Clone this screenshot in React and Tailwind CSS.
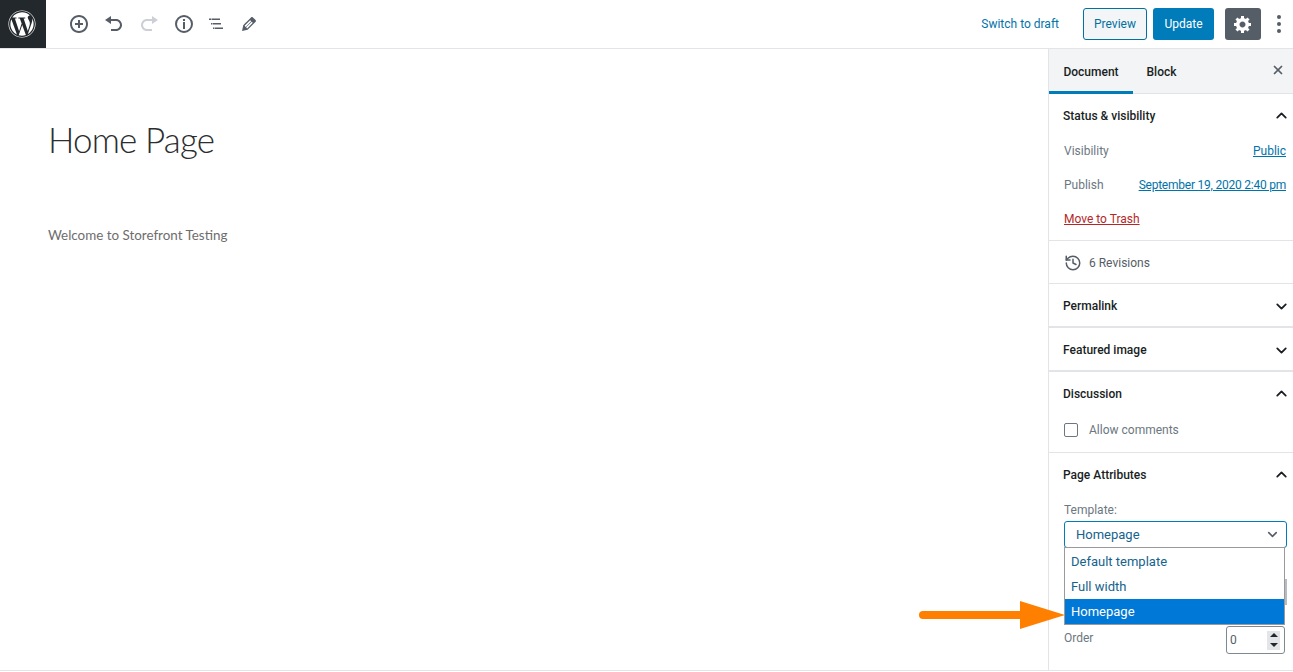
import React from 'react'
import { FaWordpress } from 'react-icons/fa'
import { ChevronUp, ChevronDown, History, X } from 'lucide-react'

const Icon = ({ d, className = 'text-[#555d66]' }) => (
  <svg viewBox="0 0 20 20" className={`w-5 h-5 fill-current ${className}`}>
    <path fillRule="evenodd" d={d} />
  </svg>
)

const Panel = ({ title, open, children, className = '' }) => (
  <div className={`border-b border-[#e2e4e7] ${className}`}>
    <div className="flex items-center justify-between h-[44px] pl-[14px] pr-[3px] text-[#191e23] font-medium text-[12px]">
      <span>{title}</span>
      {open ? <ChevronUp className="w-[17px] h-[17px] -mt-[2px] text-[#191e23]" strokeWidth={2.5} /> : <ChevronDown className="w-[17px] h-[17px] text-[#191e23]" strokeWidth={2.5} />}
    </div>
    {children}
  </div>
)

const Row = ({ label, value, valueClass = '' }) => (
  <div className="flex items-center justify-between h-[34px] pl-[15px] pr-[7px]">
    <span className="text-[#6c7781]">{label}</span>
    <a className={`text-[#0073aa] underline ${valueClass}`}>{value}</a>
  </div>
)

export default function App() {
  return (
    <div className="h-[672px] overflow-hidden bg-white flex flex-col relative font-['Roboto','Noto_Sans',sans-serif] text-[12px]">
      {/* Header */}
      <header className="h-[49px] shrink-0 flex items-center border-b border-[#e2e4e7]">
        <div className="w-[46px] h-[48px] bg-[#23282d] flex items-center justify-center pr-[3px]">
          <FaWordpress className="w-[28px] h-[28px] text-white" />
        </div>
        <div className="flex items-center ml-[23px] gap-[15px]">
          <Icon d="M10 1c-5 0-9 4-9 9s4 9 9 9 9-4 9-9-4-9-9-9zm0 16c-3.9 0-7-3.1-7-7s3.1-7 7-7 7 3.1 7 7-3.1 7-7 7zm1-11H9v3H6v2h3v3h2v-3h3V9h-3V6z" />
          <Icon d="M12 5H7V2L1 6l6 4V7h5c2.2 0 4 1.8 4 4s-1.8 4-4 4H7v2h5c3.3 0 6-2.7 6-6s-2.7-6-6-6z" />
          <Icon d="M8 5h5V2l6 4-6 4V7H8c-2.2 0-4 1.8-4 4s1.8 4 4 4h5v2H8c-3.3 0-6-2.7-6-6s2.7-6 6-6z" className="text-[#ccd0d4]" />
          <Icon d="M10 1a9 9 0 100 18 9 9 0 000-18zm0 2a7 7 0 110 14 7 7 0 010-14zM9 5h2v2H9zm0 3h2v7H9z" />
          <div className="-mx-[4px]">
            <Icon d="M4 4.500h2V6H4zM6.500 4.500H15V6H6.500zM6 9h1.500v1.500H6zM8 9h8v1.500H8zM8 13.500h1.500V15H8zM10 13.500h8V15h-8z" />
          </div>
          <div className="ml-[3px]">
            <Icon d="M13.89 3.39l2.71 2.72c.46.46.42 1.24.03 1.64l-8.01 8.02-5.56 1.16 1.160-5.58s7.600-7.630 7.990-8.030c.390-.390 1.220-.390 1.680.070zm-2.730 2.790l-5.590 5.610 1.110 1.110 5.540-5.650zm-2.970 8.230l5.580-5.600-1.070-1.080-5.590 5.600z" />
          </div>
        </div>

        <div className="ml-auto flex items-center">
          <a className="text-[#0073aa] mr-[24px]">Switch to draft</a>
          <button className="w-[64px] h-[32px] rounded-[3px] border border-[#0071a1] bg-[#f3f5f6] text-[#0071a1] mr-[6px]">Preview</button>
          <button className="w-[61px] h-[32px] rounded-[3px] bg-[#007cba] text-white mr-[11px]">Update</button>
          <div className="w-[36px] h-[32px] rounded-[3px] bg-[#555d66] flex items-center justify-center mr-[4px]">
            <Icon d="M18 12h-2.180c-.170.700-.440 1.350-.810 1.930l1.540 1.540-2.100 2.100-1.540-1.540c-.580.360-1.230.630-1.910.790V19H8v-2.180c-.680-.160-1.330-.430-1.910-.790l-1.540 1.540-2.120-2.120 1.540-1.540c-.360-.580-.630-1.230-.790-1.910H1V9.030h2.170c.160-.700.440-1.350.800-1.940L2.430 5.550l2.100-2.100 1.540 1.540c.580-.370 1.240-.640 1.930-.810V2h3v2.180c.680.160 1.330.430 1.910.790l1.540-1.540 2.120 2.120-1.540 1.540c.360.590.640 1.240.800 1.940H18V12zm-8.500 1.500c1.660 0 3-1.340 3-3s-1.340-3-3-3-3 1.340-3 3 1.340 3 3 3z" className="text-white" />
          </div>
          <div className="w-[28px] flex flex-col items-center gap-[3px]">
            <span className="w-[4px] h-[4px] rounded-full bg-[#555d66]" />
            <span className="w-[4px] h-[4px] rounded-full bg-[#555d66]" />
            <span className="w-[4px] h-[4px] rounded-full bg-[#555d66]" />
          </div>
        </div>
      </header>

      <div className="flex-1 flex min-h-0 border-b border-[#e2e4e7] mb-[1px]">
        {/* Editor */}
        <main className="flex-1 pl-[48px]">
          <h1 className="mt-[65px] text-[35px] leading-[50px] font-light font-['Lato',sans-serif] text-[#2b2d2f] tracking-[-0.85px]">Home Page</h1>
          <p className="mt-[59px] text-[13.4px] leading-[24px] font-['Lato',sans-serif] text-[#6d6d6d]">Welcome to Storefront Testing</p>
        </main>

        {/* Sidebar */}
        <aside className="w-[245px] shrink-0 border-l border-[#e2e4e7] flex flex-col">
          <div className="h-[45px] shrink-0 bg-[#f3f4f5] border-b border-[#e2e4e7] flex items-stretch text-[12px] font-medium text-[#191e23]">
            <div className="w-[84px] flex items-center justify-center border-b-[3px] border-[#007cba] -mb-px pt-[3px]">Document</div>
            <div className="w-[57px] flex items-center justify-center pt-[1px]">Block</div>
            <X className="ml-auto mr-[8px] mt-[14px] w-[14px] h-[14px] text-[#555d66]" strokeWidth={3} />
          </div>

          <Panel title="Status & visibility" open className="h-[147px]">
            <div className="-mt-[4px]">
              <Row label="Visibility" value="Public" />
              <Row label="Publish" value="September 19, 2020 2:40 pm" valueClass="tracking-[-0.23px]" />
              <div className="pl-[15px] h-[34px] flex items-center">
                <a className="text-[#b52727] underline">Move to Trash</a>
              </div>
            </div>
          </Panel>

          <div className="h-[43px] shrink-0 border-b border-[#e2e4e7] flex items-center pl-[15px] pt-[1px] text-[#555d66]">
            <History className="w-[18px] h-[18px] mr-[7px]" strokeWidth={2} />
            <span>6 Revisions</span>
          </div>

          <Panel title="Permalink" className="h-[44px] border-b-2" />
          <Panel title="Featured image" className="h-[44px] border-b-2" />

          <Panel title="Discussion" open className="h-[81px]">
            <div className="flex items-center pl-[15px] mt-[5px]">
              <span className="w-[14px] h-[14px] rounded-[2px] border border-[#6c7781] mr-[11px]" />
              <span className="text-[#6c7781]">Allow comments</span>
            </div>
          </Panel>

          <Panel title="Page Attributes" open className="flex-1 border-b-0">
            <div className="pl-[15px] text-[#6c7781] mt-[4px] h-[18px]">Template:</div>
            <div className="h-[60px]" />
            <div className="h-[47px] relative">
              <span className="absolute right-[6px] top-[0px] w-[2px] h-[26px] bg-[#b5bcc2]" />
            </div>
            <div className="flex items-center justify-between pl-[15px] pr-[8px] h-[28px]">
              <span className="text-[#6c7781] pb-[4px]">Order</span>
              <div className="w-[59px] h-[28px] rounded-[3px] border border-[#7e8993] flex items-center justify-between pl-[3px] pr-[4px]">
                <span className="text-[#555d66]">0</span>
                <div className="w-[13px] h-[19px] bg-[#e3e5e8] flex flex-col items-center justify-around">
                  <span className="w-0 h-0 border-x-[4px] border-x-transparent border-b-[4px] border-b-[#23282d]" />
                  <span className="w-0 h-0 border-x-[4px] border-x-transparent border-t-[4px] border-t-[#23282d]" />
                </div>
              </div>
            </div>
          </Panel>
        </aside>
      </div>

      {/* Open select with its list, over the panel */}
      <div className="absolute left-[1064px] top-[521px] w-[225px] z-10">
        <div className="w-[223px] h-[27px] rounded-[3px] border border-[#007cba] bg-white flex items-center justify-between pl-[11px] pr-[6px] text-[13px]">
          <span className="text-[#16638c]">Homepage</span>
          <ChevronDown className="w-[15px] h-[15px] text-[#555d66]" strokeWidth={2.5} />
        </div>
        <ul className="w-[221px] -mt-px relative border border-[#9a9a9a] bg-white text-[13px] text-[#16638c]">
          <li className="h-[26px] pl-[6px] pt-[1px] flex items-center">Default template</li>
          <li className="h-[25px] pl-[6px] pt-[1px] flex items-center">Full width</li>
          <li className="h-[25px] pl-[6px] pt-[1px] flex items-center bg-[#0078d7] text-white">Homepage</li>
        </ul>
      </div>

      {/* Annotation arrow */}
      <svg className="absolute left-[915px] top-[598px] z-20" width="150" height="34" viewBox="0 0 150 34">
        <line x1="8" y1="17" x2="110" y2="17" stroke="#ff7f00" strokeWidth="8" strokeLinecap="round" />
        <polygon points="105,3 150,17 105,31" fill="#ff7f00" />
      </svg>
    </div>
  )
}
